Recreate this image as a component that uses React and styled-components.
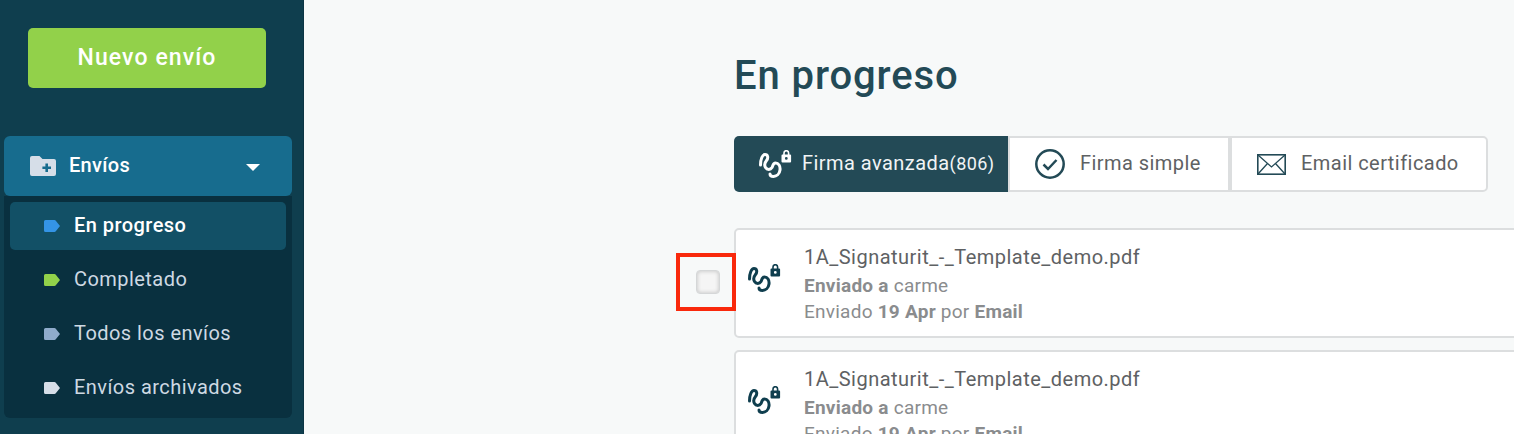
import React from "react";
import styled, { createGlobalStyle } from "styled-components";

const Global = createGlobalStyle`
  html, body { margin: 0; padding: 0; height: 100%; overflow: hidden; }
  body { background: #f7f9f9; font-family: Roboto, "Liberation Sans", sans-serif; }
  #root { height: 100%; }
`;

const Page = styled.div`
  display: flex;
  width: 1514px;
  height: 434px;
  overflow: hidden;
`;

const Sidebar = styled.aside`
  flex: 0 0 304px;
  box-sizing: border-box;
  height: 434px;
  padding: 28px 11px 0 4px;
  background: #0f3e4e;
  border-right: 1px solid #0c3544;
  display: flex;
  flex-direction: column;
`;

const NewButton = styled.button`
  align-self: flex-start;
  margin-left: 24px;
  width: 238px;
  height: 60px;
  padding: 0 0 1px;
  border: 0;
  border-radius: 5px;
  background: #92d14a;
  color: #fff;
  font: 500 23px Roboto, sans-serif;
  letter-spacing: 1.1px;
`;

const GroupHeader = styled.div`
  margin-top: 48px;
  height: 60px;
  box-sizing: border-box;
  padding: 0 26px;
  background: #176c8e;
  border-radius: 6px;
  display: flex;
  align-items: center;
  color: #fff;
  font-size: 20px;
  font-weight: 500;
  letter-spacing: 0.3px;
`;

const HeaderLabel = styled.span`
  margin: 0 0 2px 13px;
  flex: 1;
`;

const Caret = styled.span`
  width: 0;
  height: 0;
  border-left: 7px solid transparent;
  border-right: 7px solid transparent;
  border-top: 7px solid #fff;
  margin-top: 3px;
  margin-right: 6px;
`;

const SubMenu = styled.nav`
  height: 222px;
  box-sizing: border-box;
  padding: 6px;
  background: #09303f;
  border-radius: 0 0 6px 6px;
  display: flex;
  flex-direction: column;
  gap: 6px;
`;

const Item = styled.div`
  height: 48px;
  flex: 0 0 48px;
  box-sizing: border-box;
  padding-left: 34px;
  border-radius: 5px;
  display: flex;
  align-items: center;
  gap: 14px;
  background: ${(p) => (p.$active ? "#125066" : "transparent")};
  color: ${(p) => (p.$active ? "#fff" : "#ced9e3")};
  font-size: 20px;
  letter-spacing: 0.45px;
  font-weight: ${(p) => (p.$active ? 500 : 400)};
`;

const ItemLabel = styled.span`
  margin-bottom: 2px;
`;

const Main = styled.main`
  flex: 1;
  min-width: 0;
  box-sizing: border-box;
  padding: 51px 0 0 430px;
`;

const Title = styled.h1`
  margin: 0;
  height: 50px;
  line-height: 50px;
  color: #234a56;
  font-size: 40px;
  font-weight: 500;
  letter-spacing: 0.9px;
`;

const Tabs = styled.div`
  margin-top: 35px;
  display: flex;
  height: 56px;
  width: 754px;
`;

const Tab = styled.div`
  box-sizing: border-box;
  width: ${(p) => p.$w}px;
  height: 56px;
  padding-left: 25px;
  display: flex;
  align-items: center;
  gap: ${(p) => p.$gap}px;
  font-size: 20px;
  letter-spacing: 0.45px;
  color: ${(p) => (p.$active ? "#f1f4f5" : "#5e6163")};
  background: ${(p) => (p.$active ? "#234a56" : "#fff")};
  border: ${(p) => (p.$active ? "0" : "2px solid #dcdedf")};
  border-radius: ${(p) => p.$radius || "0"};
`;

const TabLabel = styled.span`
  margin-bottom: 2px;
  white-space: nowrap;
`;

const Count = styled.span`
  font-size: 18px;
`;

const Row = styled.div`
  margin-top: ${(p) => p.$mt}px;
  position: relative;
`;

const Card = styled.article`
  box-sizing: border-box;
  width: 900px;
  height: 110px;
  background: #fff;
  border: 2px solid #dcdedf;
  border-radius: 5px;
  padding: 14px 0 0 12px;
  display: flex;
  gap: 22px;
`;

const CardIcon = styled.div`
  padding-top: 20px;
`;

const CardText = styled.div`
  display: flex;
  flex-direction: column;
  color: #8a8c8e;
  font-size: 19px;
  letter-spacing: 0.25px;
  line-height: 26px;
`;

const FileName = styled.div`
  color: #5e6163;
  font-size: 20px;
  letter-spacing: 0.48px;
  line-height: 26px;
  margin-bottom: 3px;
`;

const Highlight = styled.div`
  position: absolute;
  left: -58px;
  top: 25px;
  width: 60px;
  height: 58px;
  box-sizing: border-box;
  border: 4px solid #f9290c;
  display: flex;
  align-items: center;
  justify-content: center;
  padding-left: 4px;
`;

const Check = styled.span`
  display: block;
  box-sizing: border-box;
  width: 24px;
  height: 24px;
  border: 1px solid #d5d7d8;
  border-radius: 4px;
  background: #f5f5f5;
  box-shadow: inset 0 0 4px rgba(0, 0, 0, 0.22);
`;

const TabSign = styled.span`
  display: flex;
  margin-top: 2px;
`;

const FolderIcon = () => (
  <svg width="26" height="20" viewBox="0 0 26 20">
    <path d="M0 2a2 2 0 0 1 2-2h7.500l3 3H24a2 2 0 0 1 2 2v13a2 2 0 0 1-2 2H2a2 2 0 0 1-2-2z" fill="#d6dee8" />
    <path d="M15.400 7.500h2.600v3h3v2.600h-3v3h-2.600v-3h-3v-2.600h3z" fill="#176c8e" />
  </svg>
);

const TagIcon = ({ color }) => (
  <svg width="16" height="12" viewBox="0 0 16 12">
    <path d="M1.500 0H10.500a1.500 1.500 0 0 1 1.100.5L16 6l-4.400 5.500a1.500 1.500 0 0 1-1.100.5H1.500A1.500 1.500 0 0 1 0 10.500V1.500A1.500 1.500 0 0 1 1.500 0z" fill={color} />
  </svg>
);

const SignIcon = ({ color }) => (
  <svg width="34" height="30" viewBox="4 4 34 30" fill="none">
    <path
      d="M5.500 19C5.500 13 7.500 8.500 10 8.500C13 8.500 13.500 12 11.500 14.500C9.500 17 9 19 10.500 21.500C12 24 15.500 24 17 21.500C18 19.500 18 17 20.500 17C23.500 17 25.500 20 25 24C24.500 28 21.500 30.500 18.500 30.500C16.500 30.500 15 29.500 15 28"
      stroke={color}
      strokeWidth="3"
      strokeLinecap="round"
      strokeLinejoin="round"
    />
    <path d="M29 9V7a2.300 2.300 0 0 1 4.600 0V9" stroke={color} strokeWidth="1.600" />
    <path
      fillRule="evenodd"
      d="M27.500 8.500h7.600a1 1 0 0 1 1 1v6a1 1 0 0 1-1 1h-7.600a1 1 0 0 1-1-1v-6a1 1 0 0 1 1-1zM31.300 11a1.400 1.400 0 1 0 0 2.800a1.400 1.400 0 0 0 0-2.800z"
      fill={color}
    />
  </svg>
);

const CheckCircleIcon = () => (
  <svg width="30" height="30" viewBox="0 0 30 30" fill="none">
    <circle cx="15" cy="15" r="13.700" stroke="#234a56" strokeWidth="2.500" />
    <path d="M8.500 15.500l4.500 4.500L21.500 11" stroke="#234a56" strokeWidth="2.500" />
  </svg>
);

const MailIcon = () => (
  <svg width="29" height="21" viewBox="0 0 29 21" fill="none">
    <rect x="0.800" y="0.800" width="27.400" height="19.400" stroke="#234a56" strokeWidth="1.600" />
    <path d="M1 1l13.500 12L28 1M1 20l9.500-10.500M28 20L18.500 9.500" stroke="#234a56" strokeWidth="1.300" />
  </svg>
);

const CardBody = () => (
  <CardText>
    <FileName>1A_Signaturit_-_Template_demo.pdf</FileName>
    <div><b>Enviado a</b> carme</div>
    <div>Enviado <b>19 Apr</b> por <b>Email</b></div>
  </CardText>
);

export default function App() {
  return (
    <Page>
      <Global />
      <Sidebar>
        <NewButton>Nuevo envío</NewButton>
        <GroupHeader>
          <FolderIcon />
          <HeaderLabel>Envíos</HeaderLabel>
          <Caret />
        </GroupHeader>
        <SubMenu>
          <Item $active><TagIcon color="#3494e6" /><ItemLabel>En progreso</ItemLabel></Item>
          <Item><TagIcon color="#92d14a" /><ItemLabel>Completado</ItemLabel></Item>
          <Item><TagIcon color="#8fabcb" /><ItemLabel>Todos los envíos</ItemLabel></Item>
          <Item><TagIcon color="#d6dee8" /><ItemLabel>Envíos archivados</ItemLabel></Item>
        </SubMenu>
      </Sidebar>
      <Main>
        <Title>En progreso</Title>
        <Tabs>
          <Tab $active $w={274} $gap={9} $radius="5px 0 0 5px">
            <TabSign><SignIcon color="#fff" /></TabSign>
            <TabLabel>Firma avanzada<Count>(806)</Count></TabLabel>
          </Tab>
          <Tab $w={222} $gap={15}>
            <CheckCircleIcon />
            <TabLabel>Firma simple</TabLabel>
          </Tab>
          <Tab $w={258} $gap={15} $radius="0 5px 5px 0">
            <MailIcon />
            <TabLabel>Email certificado</TabLabel>
          </Tab>
        </Tabs>
        <Row $mt={36}>
          <Highlight><Check /></Highlight>
          <Card>
            <CardIcon><SignIcon color="#0f3e4e" /></CardIcon>
            <CardBody />
          </Card>
        </Row>
        <Row $mt={12}>
          <Card>
            <CardIcon><SignIcon color="#0f3e4e" /></CardIcon>
            <CardBody />
          </Card>
        </Row>
      </Main>
    </Page>
  );
}
